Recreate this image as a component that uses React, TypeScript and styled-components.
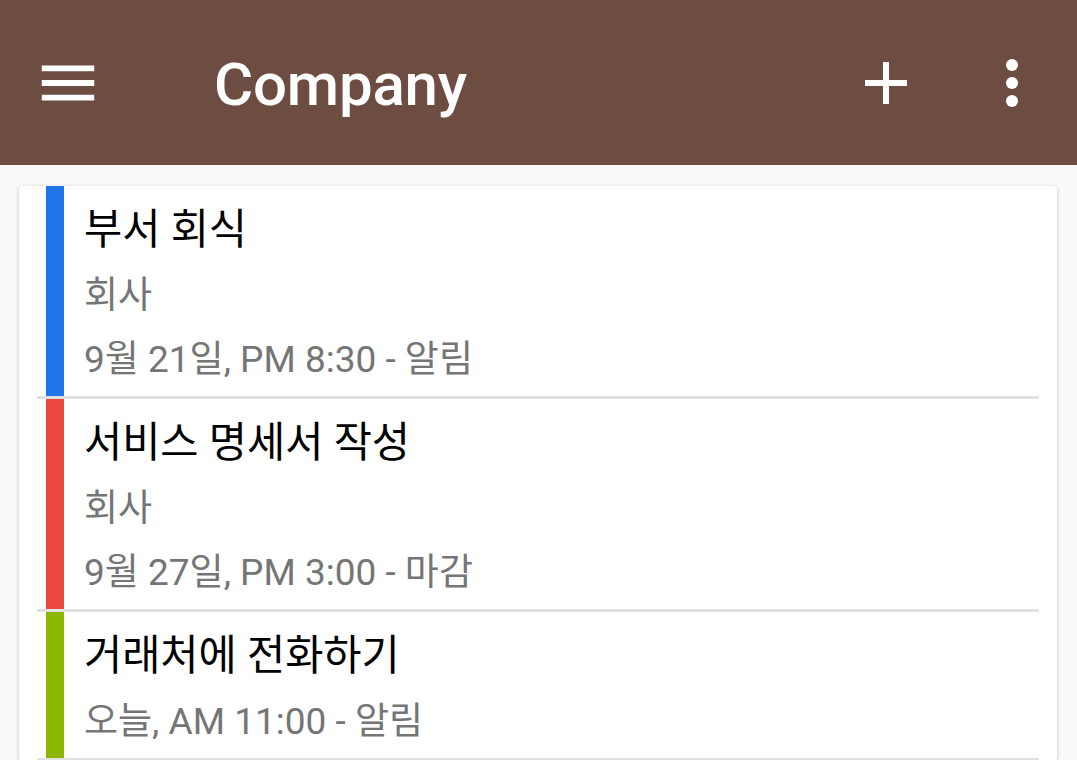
import React from "react";
import styled, { createGlobalStyle } from "styled-components";

const GlobalStyle = createGlobalStyle`
  html, body {
    margin: 0;
    padding: 0;
    background: #fafafa;
    font-family: Roboto, "Noto Sans CJK KR", sans-serif;
    overflow: hidden;
  }
`;

const Page = styled.div`
  width: 1077px;
  height: 760px;
  background: #fafafa;
  overflow: hidden;
`;

const Toolbar = styled.header`
  display: flex;
  align-items: center;
  height: 165px;
  padding: 0 29px 0 32px;
  background: #6d4c41;
  color: #fff;
  box-sizing: border-box;
`;

const IconButton = styled.button`
  display: flex;
  align-items: center;
  justify-content: center;
  width: 72px;
  height: 72px;
  padding: 0;
  border: none;
  background: transparent;
  color: #fff;
  flex-shrink: 0;
`;

const Title = styled.h1`
  flex: 1;
  margin: 0 0 0 110px;
  padding-top: 3px;
  font-family: Roboto, sans-serif;
  font-weight: 500;
  font-size: 60px;
  letter-spacing: -0.2px;
  color: #fff;
`;

const Actions = styled.div`
  display: flex;
  align-items: center;
  gap: 54px;
`;

const Card = styled.section`
  margin: 21px 20px 0 19px;
  background: #fff;
  border-radius: 4px;
  box-shadow: 0 1px 4px rgba(0, 0, 0, 0.22);
  overflow: hidden;
`;

const Item = styled.div`
  display: flex;
  margin: 0 18px;
  border-bottom: 3px solid #e0e0e0;
`;

const Bar = styled.div<{ $color: string }>`
  width: 18px;
  margin-left: 9px;
  flex-shrink: 0;
  background: ${(p) => p.$color};
`;

const Content = styled.div`
  display: flex;
  flex-direction: column;
  padding: 16px 0 4px 20px;
`;

const ItemTitle = styled.div`
  font-size: 41.5px;
  line-height: 56px;
  color: #000;
  margin-bottom: 6px;
`;

const Secondary = styled.div`
  font-size: 37px;
  line-height: 64px;
  color: #757575;
`;

const MenuIcon = () => (
  <svg width="70" height="70" viewBox="0 0 24 24" fill="#fff">
    <path d="M3 18h18v-2H3v2zm0-5h18v-2H3v2zm0-7v2h18V6H3z" />
  </svg>
);

const AddIcon = () => (
  <svg width="72" height="72" viewBox="0 0 24 24" fill="#fff">
    <path d="M19 13h-6v6h-2v-6H5v-2h6V5h2v6h6v2z" />
  </svg>
);

const MoreIcon = () => (
  <svg width="72" height="72" viewBox="0 0 24 24" fill="#fff">
    <circle cx="12" cy="6" r="2" />
    <circle cx="12" cy="12" r="2" />
    <circle cx="12" cy="18" r="2" />
  </svg>
);

type Task = { title: string; lines: string[]; color: string };

const tasks: Task[] = [
  { title: "부서 회식", lines: ["회사", "9월 21일, PM 8:30 - 알림"], color: "#1f74ea" },
  { title: "서비스 명세서 작성", lines: ["회사", "9월 27일, PM 3:00 - 마감"], color: "#e8483f" },
  { title: "거래처에 전화하기", lines: ["오늘, AM 11:00 - 알림"], color: "#8db600" },
];

export default function App() {
  return (
    <Page>
      <GlobalStyle />
      <Toolbar>
        <IconButton aria-label="menu">
          <MenuIcon />
        </IconButton>
        <Title>Company</Title>
        <Actions>
          <IconButton aria-label="add">
            <AddIcon />
          </IconButton>
          <IconButton aria-label="more">
            <MoreIcon />
          </IconButton>
        </Actions>
      </Toolbar>
      <Card>
        {tasks.map((t) => (
          <Item key={t.title}>
            <Bar $color={t.color} />
            <Content>
              <ItemTitle>{t.title}</ItemTitle>
              {t.lines.map((l) => (
                <Secondary key={l}>{l}</Secondary>
              ))}
            </Content>
          </Item>
        ))}
      </Card>
    </Page>
  );
}
